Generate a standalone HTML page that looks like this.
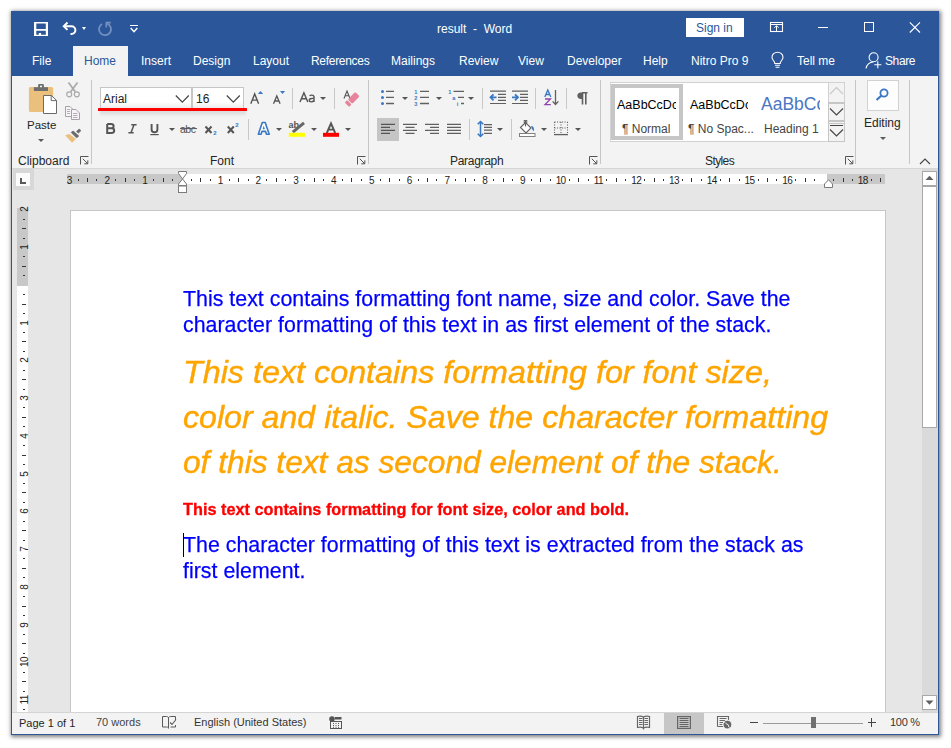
<!DOCTYPE html>
<html><head><meta charset="utf-8">
<style>
html,body{margin:0;padding:0;}
body{width:951px;height:748px;overflow:hidden;position:relative;background:#fff;font-family:"Liberation Sans",sans-serif;}
.a{position:absolute;}
.t{position:absolute;white-space:nowrap;line-height:1;}
svg{position:absolute;overflow:visible;}
.tab{position:absolute;top:55px;color:#fff;font-size:12px;line-height:12px;white-space:nowrap;}
.lbl{position:absolute;color:#262626;font-size:12px;line-height:12px;white-space:nowrap;}
.sep{position:absolute;width:1px;background:#c8c8c8;}
.gsep{position:absolute;width:1px;background:#d2d2d2;top:80px;height:84px;}
.dd{position:absolute;width:0;height:0;border-left:3px solid transparent;border-right:3px solid transparent;border-top:3.2px solid #555;}
.rn{position:absolute;font-size:10px;line-height:10px;color:#222;top:176px;}
.st{position:absolute;font-size:11px;line-height:11px;color:#444;top:716px;white-space:nowrap;}
</style></head>
<body>
<!-- window shadow & frame -->
<div class="a" style="left:11px;top:11px;width:928px;height:724px;background:#2b579a;box-shadow:0.5px 0.5px 4px 1px rgba(0,0,0,0.5);"></div>
<!-- ribbon background -->
<div class="a" style="left:12px;top:76px;width:926px;height:92px;background:#f3f3f3;"></div>
<div class="a" style="left:12px;top:168px;width:926px;height:1px;background:#d6d6d6;"></div>
<!-- doc area -->
<div class="a" style="left:12px;top:169px;width:926px;height:543px;background:#e6e6e6;"></div>
<!-- status bar -->
<div class="a" style="left:12px;top:712px;width:926px;height:1px;background:#d4d4d4;"></div>
<div class="a" style="left:12px;top:713px;width:926px;height:21px;background:#f3f3f3;"></div>

<!-- ===== title bar ===== -->
<svg style="left:34px;top:22px" width="14" height="14" viewBox="0 0 14 14">
 <path fill-rule="evenodd" fill="#fff" d="M0 0 H14 V14 H0 Z M2.3 1.5 V6.9 H11.8 V1.5 Z M2.3 8.8 V12.8 H4.8 V10.9 H7.1 V12.8 H11.8 V8.8 Z"/>
</svg>
<svg style="left:62px;top:21px" width="16" height="16" viewBox="0 0 16 16">
 <path d="M5.5 1.5 L1.8 5.2 L5.5 8.9" fill="none" stroke="#fff" stroke-width="2"/>
 <path d="M2.5 5.2 H9.5 A3.9 3.9 0 0 1 9.5 13 H8.5" fill="none" stroke="#fff" stroke-width="2"/>
</svg>
<div class="dd" style="left:82px;top:27px;border-top-color:#fff;border-left-width:2.5px;border-right-width:2.5px;border-top-width:3px"></div>
<svg style="left:97px;top:21px" width="16" height="16" viewBox="0 0 16 16">
 <path d="M9.5 2.4 A6 6 0 1 1 5 3" fill="none" stroke="#7590c0" stroke-width="1.8"/>
 <path d="M8.6 1.6 H13.8 M9.3 1.6 V6.6" fill="none" stroke="#7590c0" stroke-width="1.6"/>
</svg>
<div class="a" style="left:130px;top:25px;width:8px;height:1.3px;background:#fff"></div>
<svg style="left:130px;top:27px" width="9" height="6" viewBox="0 0 9 6">
 <path d="M0.7 1 L4 4.8 L7.3 1" fill="none" stroke="#fff" stroke-width="1.4"/>
</svg>
<div class="t" style="left:437px;top:23px;font-size:12px;color:#fff">result&nbsp; -&nbsp; Word</div>
<div class="a" style="left:686px;top:18px;width:58px;height:19px;background:#fff;"></div>
<div class="t" style="left:696px;top:22px;font-size:12px;color:#2b579a">Sign in</div>
<svg style="left:770px;top:22px" width="13" height="10" viewBox="0 0 13 10">
 <rect x="0.5" y="0.5" width="12" height="9" fill="none" stroke="#fff" stroke-width="1.1"/>
 <path d="M0.5 2.5 H12.5" stroke="#fff" stroke-width="1"/>
 <path d="M6.5 9.5 V3.8 M4.4 5.8 L6.5 3.7 L8.6 5.8" fill="none" stroke="#fff" stroke-width="1"/>
</svg>
<div class="a" style="left:818px;top:27px;width:10px;height:1px;background:#fff"></div>
<div class="a" style="left:864px;top:22px;width:8px;height:8px;border:1px solid #fff"></div>
<svg style="left:909px;top:22px" width="12" height="11" viewBox="0 0 12 11">
 <path d="M0.8 0.3 L11 10.5 M11 0.3 L0.8 10.5" stroke="#fff" stroke-width="1.1"/>
</svg>

<!-- ===== tabs ===== -->
<div class="a" style="left:73px;top:46px;width:55px;height:30px;background:#f3f3f3"></div>
<div class="tab" style="left:32px">File</div>
<div class="tab" style="left:84px;color:#2b579a">Home</div>
<div class="tab" style="left:141px">Insert</div>
<div class="tab" style="left:193px">Design</div>
<div class="tab" style="left:253px">Layout</div>
<div class="tab" style="left:311px;letter-spacing:-0.3px">References</div>
<div class="tab" style="left:391px">Mailings</div>
<div class="tab" style="left:459px">Review</div>
<div class="tab" style="left:518px">View</div>
<div class="tab" style="left:567px">Developer</div>
<div class="tab" style="left:643px">Help</div>
<div class="tab" style="left:691px">Nitro Pro 9</div>
<svg style="left:771px;top:52px" width="13" height="17" viewBox="0 0 13 17">
 <path d="M3.8 11.5 C3.8 9 1 8 1 5.4 A5.5 5.2 0 0 1 12 5.4 C12 8 9.2 9 9.2 11.5 Z" fill="none" stroke="#fff" stroke-width="1.1"/>
 <path d="M4 13.3 H9 M4.6 15.3 H8.4" stroke="#fff" stroke-width="1.1"/>
</svg>
<div class="tab" style="left:797px">Tell me</div>
<svg style="left:865px;top:52px" width="16" height="17" viewBox="0 0 16 17">
 <circle cx="8.6" cy="5.3" r="4.5" fill="none" stroke="#fff" stroke-width="1.1"/>
 <path d="M1 16.5 C1.8 12.5 4.5 10.2 8.3 10" fill="none" stroke="#fff" stroke-width="1.1"/>
 <path d="M12.8 9.3 V16.3 M9.3 12.8 H16.3" stroke="#fff" stroke-width="1.1"/>
</svg>
<div class="tab" style="left:885px;letter-spacing:-0.4px">Share</div>

<!-- Clipboard group -->
<svg style="left:28px;top:83px" width="30" height="32" viewBox="0 0 30 32">
 <rect x="0.9" y="4" width="24.2" height="25" rx="1.5" fill="#ebc07c"/>
 <rect x="5.9" y="4.2" width="14.1" height="3.8" fill="#6e6e6e"/>
 <rect x="10.1" y="1" width="5.8" height="4" rx="1" fill="#6e6e6e"/>
 <rect x="12" y="2.6" width="2" height="1.6" fill="#f3f3f3"/>
 <path d="M15.5 12.5 H23.4 L28.5 17.4 V30.5 H15.5 Z" fill="#fff" stroke="#6a6a6a" stroke-width="1"/>
 <path d="M23.2 12.5 V17.6 H28.5" fill="none" stroke="#6a6a6a" stroke-width="1"/>
</svg>
<div class="lbl" style="left:27px;top:119px;font-size:11.5px;">Paste</div>
<div class="dd" style="left:38px;top:139px;border-top-color:#5a5a5a"></div>
<svg style="left:65px;top:82px" width="16" height="16" viewBox="0 0 16 16">
 <path d="M3.5 0.5 L10.3 9.8 M12.5 0.5 L5.7 9.8" fill="none" stroke="#a9a9a9" stroke-width="1.7"/>
 <circle cx="4.2" cy="12.3" r="2.5" fill="none" stroke="#a9a9a9" stroke-width="1.2"/>
 <circle cx="11.8" cy="12.3" r="2.5" fill="none" stroke="#a9a9a9" stroke-width="1.2"/>
</svg>
<svg style="left:65px;top:106px" width="16" height="15" viewBox="0 0 16 15">
 <path d="M0.5 0.5 H5 L7.5 3 V10.5 H0.5 Z" fill="#f7f5f7" stroke="#aaa1a8" stroke-width="1"/>
 <path d="M6.5 3.5 H11 L14.5 7 V13.5 H6.5 Z" fill="#f7f5f7" stroke="#aaa1a8" stroke-width="1"/>
 <path d="M2 3.5 H5 M2 5.5 H5 M2 7.5 H5 M8 7.5 H12.5 M8 9.5 H12.5 M8 11.5 H12.5" stroke="#b5adb3" stroke-width="1"/>
</svg>
<svg style="left:64px;top:128px" width="18" height="16" viewBox="0 0 18 16">
 <path d="M1.1 7.3 L5.4 5.9 L11.9 11 L8.1 14.8 Z" fill="#ebc07c"/>
 <path d="M7.2 4.4 L9.2 3.1 L14.8 8.1 L12.5 9.8 Z" fill="#6a6a6a" stroke="#6a6a6a" stroke-width="0.8" stroke-linejoin="round"/>
 <path d="M12.5 3.3 L15.1 1 L17 2.6 L14.4 5.2 Z" fill="#6a6a6a" stroke="#6a6a6a" stroke-width="0.6" stroke-linejoin="round"/>
</svg>
<div class="sep" style="left:91px;top:80px;height:84px;background:#c6c6c6"></div>
<div class="lbl" style="left:18px;top:155px;">Clipboard</div>
<svg style="left:80px;top:156px" width="9" height="9" viewBox="0 0 9 9">
 <path d="M0.5 8.5 V0.5 H8.5 M2.8 2.8 L7.8 7.8 M7.8 4.3 V7.8 H4.3" fill="none" stroke="#555" stroke-width="1"/>
</svg>

<!-- Font group -->
<div class="a" style="left:100px;top:87px;width:92px;height:21px;background:linear-gradient(#fff 70%,#ececec);border:1px solid #c6c6c6;border-bottom:none;box-sizing:border-box;"></div>
<div class="a" style="left:192px;top:87px;width:52px;height:21px;background:linear-gradient(#fff 70%,#ececec);border:1px solid #c6c6c6;border-bottom:none;box-sizing:border-box;"></div>
<div class="t" style="left:103px;top:93px;font-size:12px;color:#222">Arial</div>
<div class="t" style="left:196px;top:93px;font-size:12px;color:#222">16</div>
<svg style="left:175px;top:94px" width="15" height="10" viewBox="0 0 15 10">
 <path d="M0.8 1.5 L7.3 8.2 L13.8 1.5" fill="none" stroke="#444" stroke-width="1.2"/>
</svg>
<svg style="left:226px;top:94px" width="15" height="10" viewBox="0 0 15 10">
 <path d="M0.8 1.5 L7.3 8.2 L13.8 1.5" fill="none" stroke="#444" stroke-width="1.2"/>
</svg>
<div class="a" style="left:100px;top:110px;width:146px;height:7px;background:linear-gradient(rgba(0,0,0,0.13),rgba(0,0,0,0));filter:blur(1.2px)"></div>
<div class="a" style="left:98px;top:108px;width:149px;height:3px;background:#f00;border-radius:0.5px;"></div>
<!-- grow/shrink -->
<svg style="left:250px;top:90px" width="36" height="15" viewBox="0 0 36 15">
 <path d="M0.8 13.8 L4.7 4 L8.6 13.8 M2.3 10.1 H7.1" fill="none" stroke="#555" stroke-width="1.4"/>
 <path d="M7.9 3.9 L10.5 0.9 L13.1 3.9 Z" fill="#3a78c3"/>
 <path d="M23.5 13.8 L26.8 6 L30.1 13.8 M24.7 11 H28.9" fill="none" stroke="#555" stroke-width="1.3"/>
 <path d="M30 0.9 L35.1 0.9 L32.55 3.9 Z" fill="#3a78c3"/>
</svg>
<div class="sep" style="left:292px;top:88px;height:21px;"></div>
<svg style="left:299px;top:92px" width="17" height="11" viewBox="0 0 17 11">
 <path d="M1 10 L4.9 0.8 L8.8 10 M2.5 6.8 H7.3" fill="none" stroke="#555" stroke-width="1.5"/>
 <path d="M10.6 3.8 C11.5 3 14.5 2.7 15 4.5 V10 M15 6.5 C12 6.2 10.2 6.8 10.2 8.3 C10.2 10.3 13.5 10.3 15 8.5" fill="none" stroke="#555" stroke-width="1.4"/>
</svg>
<div class="dd" style="left:320px;top:97px;"></div>
<div class="sep" style="left:334px;top:88px;height:21px;"></div>
<svg style="left:343px;top:90px" width="16" height="16" viewBox="0 0 16 16">
 <path d="M1 8.5 L4 1 L7 8.5 M2.2 5.8 H5.8" fill="none" stroke="#555" stroke-width="1.1"/>
 <g transform="translate(9.3 9.3) rotate(-45)">
  <rect x="-3.2" y="-3.1" width="10.4" height="6.2" rx="1.2" fill="#e5849a"/>
  <rect x="-7.6" y="-3.1" width="3.4" height="6.2" rx="1" fill="#e5849a"/>
 </g>
</svg>
<!-- row 2 -->
<svg style="left:106px;top:124px" width="9" height="10" viewBox="0 0 9 10">
 <path d="M1.2 0 V9 H5 C7 9 8.2 8 8.2 6.5 C8.2 5 7.2 4.3 5.5 4.3 H1.2 M5.5 4.3 C6.8 4.3 7.6 3.6 7.6 2.2 C7.6 0.8 6.6 0 5 0 H1.2" fill="none" stroke="#555" stroke-width="2"/>
</svg>
<svg style="left:128px;top:124px" width="9" height="10" viewBox="0 0 9 10">
 <path d="M3.3 0.8 H8.6 M0.4 8.7 H5.7 M6 0.8 L3 8.7" fill="none" stroke="#555" stroke-width="1.5"/>
</svg>
<svg style="left:150px;top:124px" width="10" height="12" viewBox="0 0 10 12">
 <path d="M1.6 0 V5.5 C1.6 7.5 2.8 8.3 4.5 8.3 C6.2 8.3 7.4 7.5 7.4 5.5 V0" fill="none" stroke="#555" stroke-width="1.9"/>
 <path d="M0.3 10.6 H8.7" stroke="#555" stroke-width="1.2"/>
</svg>
<div class="dd" style="left:169px;top:128px;"></div>
<svg style="left:180px;top:123px" width="18" height="11" viewBox="0 0 18 11">
 <text x="0" y="9.5" font-family="Liberation Sans" font-size="10.5" fill="#555" letter-spacing="-0.5">abc</text>
 <path d="M0 5.6 H17" stroke="#555" stroke-width="1"/>
</svg>
<svg style="left:204px;top:123px" width="36" height="13" viewBox="0 0 36 13">
 <path d="M1.5 3.5 L7.5 10 M7.5 3.5 L1.5 10" stroke="#555" stroke-width="2"/>
 <text x="9.3" y="11.8" font-family="Liberation Sans" font-size="6" font-weight="bold" fill="#3a78c3">2</text>
 <path d="M23.8 3.5 L29.8 10 M29.8 3.5 L23.8 10" stroke="#555" stroke-width="2"/>
 <text x="31.3" y="4.2" font-family="Liberation Sans" font-size="6" font-weight="bold" fill="#3a78c3">2</text>
</svg>
<div class="sep" style="left:248px;top:119px;height:21px;"></div>
<svg style="left:257px;top:121px" width="14" height="15" viewBox="0 0 14 15">
 <path d="M1.3 13.2 L5.3 1.5 H8.2 L12.2 13.2 H9.5 L8.6 10.4 H4.9 L4 13.2 Z" fill="#fff" stroke="#3a78c3" stroke-width="1.6" stroke-linejoin="round"/>
 <path d="M5.6 8.2 H7.9 L6.75 4.6 Z" fill="#3a78c3"/>
</svg>
<div class="dd" style="left:276px;top:128px;"></div>
<svg style="left:288px;top:121px" width="18" height="16" viewBox="0 0 18 16">
 <text x="0.6" y="7" font-family="Liberation Sans" font-size="9" font-weight="bold" fill="#555">ab</text>
 <path d="M4.8 11.2 L16 1.8" stroke="#666" stroke-width="3"/>
 <rect x="0.8" y="11.8" width="16.1" height="4" fill="#ffff00"/>
</svg>
<div class="dd" style="left:311px;top:128px;"></div>
<svg style="left:323px;top:122px" width="16" height="15" viewBox="0 0 16 15">
 <path d="M3.8 11 L8 1.3 L12.2 11 M5.3 7.6 H10.7" fill="none" stroke="#555" stroke-width="1.9"/>
 <rect x="0" y="10.8" width="16" height="4" fill="#f00"/>
</svg>
<div class="dd" style="left:345px;top:128px;"></div>
<div class="lbl" style="left:210px;top:155px;">Font</div>
<svg style="left:357px;top:156px" width="9" height="9" viewBox="0 0 9 9">
 <path d="M0.5 8.5 V0.5 H8.5 M2.8 2.8 L7.8 7.8 M7.8 4.3 V7.8 H4.3" fill="none" stroke="#555" stroke-width="1"/>
</svg>
<div class="sep" style="left:368px;top:80px;height:84px;background:#c6c6c6"></div>

<!-- Paragraph group -->
<svg style="left:380px;top:89px" width="15" height="16" viewBox="0 0 15 16">
 <circle cx="2.5" cy="2.4" r="1.5" fill="#3a78c3"/><circle cx="2.5" cy="8.4" r="1.5" fill="#3a78c3"/><circle cx="2.5" cy="14.5" r="1.5" fill="#3a78c3"/>
 <path d="M6 2.4 H14 M6 8.4 H14 M6 14.5 H14" stroke="#606060" stroke-width="1.3"/>
</svg>
<div class="dd" style="left:402px;top:97px;"></div>
<svg style="left:413px;top:88px" width="17" height="18" viewBox="0 0 17 18">
 <text x="1.3" y="5.8" font-family="Liberation Sans" font-size="5.6" font-weight="bold" fill="#3a78c3">1</text>
 <text x="1.3" y="11.8" font-family="Liberation Sans" font-size="5.6" font-weight="bold" fill="#3a78c3">2</text>
 <text x="1.3" y="17.8" font-family="Liberation Sans" font-size="5.6" font-weight="bold" fill="#3a78c3">3</text>
 <path d="M7 3.4 H16 M7 9.4 H16 M7 15.5 H16" stroke="#606060" stroke-width="1.3"/>
</svg>
<div class="dd" style="left:436px;top:97px;"></div>
<svg style="left:447px;top:88px" width="18" height="18" viewBox="0 0 18 18">
 <text x="1.3" y="5.8" font-family="Liberation Sans" font-size="5.6" font-weight="bold" fill="#3a78c3">1</text>
 <text x="5.3" y="11.8" font-family="Liberation Sans" font-size="5.6" font-weight="bold" fill="#3a78c3">a</text>
 <text x="9.8" y="17.8" font-family="Liberation Sans" font-size="5.6" font-weight="bold" fill="#3a78c3">i</text>
 <path d="M6.5 3.4 H17 M11 9.4 H17 M14 15.5 H17" stroke="#606060" stroke-width="1.3"/>
</svg>
<div class="dd" style="left:468px;top:97px;"></div>
<div class="sep" style="left:482px;top:88px;height:21px;"></div>
<svg style="left:489px;top:90px" width="18" height="15" viewBox="0 0 18 15">
 <path d="M1 1.2 H17 M9 4.3 H17 M9 7.3 H17 M9 10.4 H17 M1 13.5 H17" stroke="#606060" stroke-width="1.2"/>
 <path d="M1.5 7.3 H7.5 M4.5 4.3 L1.5 7.3 L4.5 10.3" fill="none" stroke="#3a78c3" stroke-width="1.8"/>
</svg>
<svg style="left:511px;top:90px" width="18" height="15" viewBox="0 0 18 15">
 <path d="M1 1.2 H17 M9 4.3 H17 M9 7.3 H17 M9 10.4 H17 M1 13.5 H17" stroke="#606060" stroke-width="1.2"/>
 <path d="M1 7.3 H7 M4 4.3 L7 7.3 L4 10.3" fill="none" stroke="#3a78c3" stroke-width="1.8"/>
</svg>
<div class="sep" style="left:535px;top:88px;height:21px;"></div>
<svg style="left:544px;top:89px" width="16" height="17" viewBox="0 0 16 17">
 <path d="M0.8 8 L3.8 1 L6.8 8 M2 5.5 H5.6" fill="none" stroke="#3a78c3" stroke-width="1.3"/>
 <path d="M1 10 H6.5 L1 15.6 H6.8" fill="none" stroke="#8e44ad" stroke-width="1.3"/>
 <path d="M11.5 1 V15.5 M8.6 12.4 L11.5 15.5 L14.4 12.4" fill="none" stroke="#606060" stroke-width="1.3"/>
</svg>
<div class="sep" style="left:566px;top:88px;height:21px;"></div>
<svg style="left:577px;top:92px" width="11" height="13" viewBox="0 0 11 13">
 <path d="M5.5 0.5 H3.8 C1.6 0.5 0.3 1.9 0.3 3.7 C0.3 5.5 1.6 6.9 3.8 6.9 H5.5 Z" fill="#606060"/>
 <path d="M5.5 0.8 V12.5 M8.8 0.8 V12.5 M5 0.8 H10.5" stroke="#606060" stroke-width="1.6"/>
</svg>
<!-- row 2 -->
<div class="a" style="left:377px;top:118px;width:22px;height:23px;background:#c5c5c5"></div>
<svg style="left:380px;top:123px" width="16" height="12" viewBox="0 0 16 12">
 <path d="M1 1.3 H15 M1 4.3 H10 M1 7.3 H15 M1 10.3 H10" stroke="#555" stroke-width="1.2"/>
</svg>
<svg style="left:402px;top:123px" width="16" height="12" viewBox="0 0 16 12">
 <path d="M1 1.3 H15 M3.5 4.3 H12.5 M1 7.3 H15 M3.5 10.3 H12.5" stroke="#606060" stroke-width="1.2"/>
</svg>
<svg style="left:424px;top:123px" width="16" height="12" viewBox="0 0 16 12">
 <path d="M1 1.3 H15 M6 4.3 H15 M1 7.3 H15 M6 10.3 H15" stroke="#606060" stroke-width="1.2"/>
</svg>
<svg style="left:446px;top:123px" width="16" height="12" viewBox="0 0 16 12">
 <path d="M1 1.3 H15 M1 4.3 H15 M1 7.3 H15 M1 10.3 H15" stroke="#606060" stroke-width="1.2"/>
</svg>
<div class="sep" style="left:469px;top:119px;height:21px;"></div>
<svg style="left:476px;top:120px" width="17" height="18" viewBox="0 0 17 18">
 <path d="M4.5 1.5 V16.5 M1.7 4.3 L4.5 1.5 L7.3 4.3 M1.7 13.7 L4.5 16.5 L7.3 13.7" fill="none" stroke="#3a78c3" stroke-width="1.5"/>
 <path d="M8 4.6 H16 M8 7.4 H16 M8 10.1 H16 M8 13.4 H16" stroke="#606060" stroke-width="1.2"/>
</svg>
<div class="dd" style="left:497px;top:128px;"></div>
<div class="sep" style="left:511px;top:119px;height:21px;"></div>
<svg style="left:518px;top:120px" width="18" height="18" viewBox="0 0 18 18">
 <path d="M2.5 7.5 L7.5 2.5 L13 8 L8 13 Z" fill="#fff" stroke="#606060" stroke-width="1.1"/>
 <path d="M7.5 1 V6.5" stroke="#606060" stroke-width="1.1"/>
 <rect x="6.2" y="0.5" width="2.6" height="2" fill="none" stroke="#606060" stroke-width="0.9"/>
 <path d="M13 6 C15.5 6 16.5 8 15.8 11.5 L14.3 9.5 Z" fill="#3a78c3"/>
 <rect x="1.5" y="13.5" width="15.5" height="3" fill="#fff" stroke="#808080" stroke-width="1"/>
</svg>
<div class="dd" style="left:541px;top:128px;"></div>
<svg style="left:553px;top:121px" width="16" height="15" viewBox="0 0 16 15">
 <path d="M1.5 1 V13 M14.5 1 V13 M1.5 1 H14.5 M8 1 V13 M1.5 7 H14.5" fill="none" stroke="#606060" stroke-width="1.1" stroke-dasharray="1.1 1.4"/>
 <path d="M1 13.6 H15" stroke="#606060" stroke-width="1.3"/>
</svg>
<div class="dd" style="left:575px;top:128px;"></div>
<div class="lbl" style="left:450px;top:155px;letter-spacing:-0.3px;">Paragraph</div>
<svg style="left:589px;top:156px" width="9" height="9" viewBox="0 0 9 9">
 <path d="M0.5 8.5 V0.5 H8.5 M2.8 2.8 L7.8 7.8 M7.8 4.3 V7.8 H4.3" fill="none" stroke="#555" stroke-width="1"/>
</svg>
<div class="sep" style="left:600px;top:80px;height:84px;background:#c6c6c6"></div>

<!-- Styles group -->
<div class="a" style="left:610px;top:82px;width:235px;height:60px;background:#fff;border:1px solid #d2d2d2;box-sizing:border-box;"></div>
<div class="a" style="left:611px;top:84px;width:72px;height:56px;border:4px solid #c6c6c6;box-sizing:border-box;"></div>
<div class="t" style="left:617px;top:99px;font-size:12.5px;color:#000;width:59px;overflow:hidden;">AaBbCcDc</div>
<div class="t" style="left:622px;top:123px;font-size:12px;color:#444;">&para; Normal</div>
<div class="t" style="left:690px;top:99px;font-size:12.5px;color:#000;width:58px;overflow:hidden;">AaBbCcDc</div>
<div class="t" style="left:688px;top:123px;font-size:12px;color:#444;">&para; No Spac...</div>
<div class="t" style="left:761px;top:96px;font-size:17.5px;color:#4a76c2;width:59px;overflow:hidden;">AaBbCc</div>
<div class="t" style="left:764px;top:123px;font-size:12px;color:#444;">Heading 1</div>
<div class="a" style="left:828px;top:82px;width:17px;height:60px;background:#f3f3f3;border:1px solid #d2d2d2;box-sizing:border-box;"></div>
<div class="a" style="left:828px;top:102px;width:17px;height:1px;background:#c6c6c6;"></div>
<div class="a" style="left:828px;top:121px;width:17px;height:1px;background:#c6c6c6;"></div>
<div class="a" style="left:828px;top:103px;width:17px;height:18px;border:1px solid #c6c6c6;box-sizing:border-box;"></div>
<div class="a" style="left:828px;top:123px;width:17px;height:19px;border:1px solid #c6c6c6;box-sizing:border-box;"></div>
<svg style="left:829px;top:86px" width="15" height="10" viewBox="0 0 15 10"><path d="M1 8 L7.5 1.5 L14 8" fill="none" stroke="#c8c8c8" stroke-width="1.1"/></svg>
<svg style="left:829px;top:107px" width="15" height="10" viewBox="0 0 15 10"><path d="M1 1.5 L7.5 8 L14 1.5" fill="none" stroke="#444" stroke-width="1.1"/></svg>
<div class="a" style="left:830px;top:125px;width:13px;height:1px;background:#444;"></div>
<svg style="left:829px;top:128px" width="15" height="10" viewBox="0 0 15 10"><path d="M1 1.5 L7.5 8 L14 1.5" fill="none" stroke="#444" stroke-width="1.1"/></svg>
<div class="lbl" style="left:705px;top:155px;letter-spacing:-0.6px;">Styles</div>
<svg style="left:845px;top:156px" width="9" height="9" viewBox="0 0 9 9">
 <path d="M0.5 8.5 V0.5 H8.5 M2.8 2.8 L7.8 7.8 M7.8 4.3 V7.8 H4.3" fill="none" stroke="#555" stroke-width="1"/>
</svg>
<div class="sep" style="left:855px;top:80px;height:84px;background:#c6c6c6"></div>
<!-- Editing -->
<div class="a" style="left:867px;top:80px;width:32px;height:31px;background:#fdfdfd;border:1px solid #d2d2d2;box-sizing:border-box;"></div>
<svg style="left:875px;top:88px" width="15" height="13" viewBox="0 0 15 13">
 <circle cx="9" cy="5" r="3.6" fill="none" stroke="#3a78c3" stroke-width="1.8"/>
 <path d="M6.5 7.5 L1.5 12" stroke="#3a78c3" stroke-width="2.2"/>
</svg>
<div class="lbl" style="left:864px;top:117px;">Editing</div>
<div class="dd" style="left:880px;top:137px;border-top-color:#5a5a5a"></div>
<div class="sep" style="left:909px;top:80px;height:84px;background:#c6c6c6"></div>
<svg style="left:919px;top:158px" width="12" height="7" viewBox="0 0 12 7"><path d="M1 6 L6 1 L11 6" fill="none" stroke="#444" stroke-width="1.1"/></svg>

<!-- RIBBON_CONTENT -->

<!-- RULER_START -->
<div class="a" style="left:13px;top:169px;width:21px;height:21px;background:#d8d8d8"></div>
<div class="a" style="left:16px;top:173px;width:14px;height:13px;background:#fbfbfb"></div>
<div class="a" style="left:20px;top:178px;width:2px;height:6px;background:#5a5a5a"></div>
<div class="a" style="left:20px;top:182px;width:6px;height:2px;background:#5a5a5a"></div>
<div class="a" style="left:67px;top:174px;width:818px;height:10px;background:#c8c8c8"></div>
<div class="a" style="left:183px;top:174px;width:644px;height:10px;background:#fff"></div>
<div class="rn" style="left:59.5px;width:20px;text-align:center;letter-spacing:0px;">3</div>
<div class="a" style="left:78px;top:179px;width:1px;height:2px;background:#333"></div>
<div class="a" style="left:87px;top:178px;width:1px;height:4px;background:#333"></div>
<div class="a" style="left:96px;top:179px;width:1px;height:2px;background:#333"></div>
<div class="rn" style="left:97.2px;width:20px;text-align:center;letter-spacing:0px;">2</div>
<div class="a" style="left:115px;top:179px;width:1px;height:2px;background:#333"></div>
<div class="a" style="left:125px;top:178px;width:1px;height:4px;background:#333"></div>
<div class="a" style="left:134px;top:179px;width:1px;height:2px;background:#333"></div>
<div class="rn" style="left:135.0px;width:20px;text-align:center;letter-spacing:0px;">1</div>
<div class="a" style="left:153px;top:179px;width:1px;height:2px;background:#333"></div>
<div class="a" style="left:163px;top:178px;width:1px;height:4px;background:#333"></div>
<div class="a" style="left:172px;top:179px;width:1px;height:2px;background:#333"></div>
<div class="a" style="left:191px;top:179px;width:1px;height:2px;background:#333"></div>
<div class="a" style="left:200px;top:178px;width:1px;height:4px;background:#333"></div>
<div class="a" style="left:210px;top:179px;width:1px;height:2px;background:#333"></div>
<div class="rn" style="left:210.6px;width:20px;text-align:center;letter-spacing:0px;">1</div>
<div class="a" style="left:229px;top:179px;width:1px;height:2px;background:#333"></div>
<div class="a" style="left:238px;top:178px;width:1px;height:4px;background:#333"></div>
<div class="a" style="left:248px;top:179px;width:1px;height:2px;background:#333"></div>
<div class="rn" style="left:248.4px;width:20px;text-align:center;letter-spacing:0px;">2</div>
<div class="a" style="left:266px;top:179px;width:1px;height:2px;background:#333"></div>
<div class="a" style="left:276px;top:178px;width:1px;height:4px;background:#333"></div>
<div class="a" style="left:285px;top:179px;width:1px;height:2px;background:#333"></div>
<div class="rn" style="left:286.1px;width:20px;text-align:center;letter-spacing:0px;">3</div>
<div class="a" style="left:304px;top:179px;width:1px;height:2px;background:#333"></div>
<div class="a" style="left:314px;top:178px;width:1px;height:4px;background:#333"></div>
<div class="a" style="left:323px;top:179px;width:1px;height:2px;background:#333"></div>
<div class="rn" style="left:323.9px;width:20px;text-align:center;letter-spacing:0px;">4</div>
<div class="a" style="left:342px;top:179px;width:1px;height:2px;background:#333"></div>
<div class="a" style="left:351px;top:178px;width:1px;height:4px;background:#333"></div>
<div class="a" style="left:361px;top:179px;width:1px;height:2px;background:#333"></div>
<div class="rn" style="left:361.7px;width:20px;text-align:center;letter-spacing:0px;">5</div>
<div class="a" style="left:380px;top:179px;width:1px;height:2px;background:#333"></div>
<div class="a" style="left:389px;top:178px;width:1px;height:4px;background:#333"></div>
<div class="a" style="left:399px;top:179px;width:1px;height:2px;background:#333"></div>
<div class="rn" style="left:399.5px;width:20px;text-align:center;letter-spacing:0px;">6</div>
<div class="a" style="left:418px;top:179px;width:1px;height:2px;background:#333"></div>
<div class="a" style="left:427px;top:178px;width:1px;height:4px;background:#333"></div>
<div class="a" style="left:436px;top:179px;width:1px;height:2px;background:#333"></div>
<div class="rn" style="left:437.3px;width:20px;text-align:center;letter-spacing:0px;">7</div>
<div class="a" style="left:455px;top:179px;width:1px;height:2px;background:#333"></div>
<div class="a" style="left:465px;top:178px;width:1px;height:4px;background:#333"></div>
<div class="a" style="left:474px;top:179px;width:1px;height:2px;background:#333"></div>
<div class="rn" style="left:475.0px;width:20px;text-align:center;letter-spacing:0px;">8</div>
<div class="a" style="left:493px;top:179px;width:1px;height:2px;background:#333"></div>
<div class="a" style="left:503px;top:178px;width:1px;height:4px;background:#333"></div>
<div class="a" style="left:512px;top:179px;width:1px;height:2px;background:#333"></div>
<div class="rn" style="left:512.8px;width:20px;text-align:center;letter-spacing:0px;">9</div>
<div class="a" style="left:531px;top:179px;width:1px;height:2px;background:#333"></div>
<div class="a" style="left:540px;top:178px;width:1px;height:4px;background:#333"></div>
<div class="a" style="left:550px;top:179px;width:1px;height:2px;background:#333"></div>
<div class="rn" style="left:550.6px;width:20px;text-align:center;letter-spacing:-0.6px;">10</div>
<div class="a" style="left:569px;top:179px;width:1px;height:2px;background:#333"></div>
<div class="a" style="left:578px;top:178px;width:1px;height:4px;background:#333"></div>
<div class="a" style="left:588px;top:179px;width:1px;height:2px;background:#333"></div>
<div class="rn" style="left:588.4px;width:20px;text-align:center;letter-spacing:-0.6px;">11</div>
<div class="a" style="left:606px;top:179px;width:1px;height:2px;background:#333"></div>
<div class="a" style="left:616px;top:178px;width:1px;height:4px;background:#333"></div>
<div class="a" style="left:625px;top:179px;width:1px;height:2px;background:#333"></div>
<div class="rn" style="left:626.2px;width:20px;text-align:center;letter-spacing:-0.6px;">12</div>
<div class="a" style="left:644px;top:179px;width:1px;height:2px;background:#333"></div>
<div class="a" style="left:654px;top:178px;width:1px;height:4px;background:#333"></div>
<div class="a" style="left:663px;top:179px;width:1px;height:2px;background:#333"></div>
<div class="rn" style="left:663.9px;width:20px;text-align:center;letter-spacing:-0.6px;">13</div>
<div class="a" style="left:682px;top:179px;width:1px;height:2px;background:#333"></div>
<div class="a" style="left:691px;top:178px;width:1px;height:4px;background:#333"></div>
<div class="a" style="left:701px;top:179px;width:1px;height:2px;background:#333"></div>
<div class="rn" style="left:701.7px;width:20px;text-align:center;letter-spacing:-0.6px;">14</div>
<div class="a" style="left:720px;top:179px;width:1px;height:2px;background:#333"></div>
<div class="a" style="left:729px;top:178px;width:1px;height:4px;background:#333"></div>
<div class="a" style="left:739px;top:179px;width:1px;height:2px;background:#333"></div>
<div class="rn" style="left:739.5px;width:20px;text-align:center;letter-spacing:-0.6px;">15</div>
<div class="a" style="left:758px;top:179px;width:1px;height:2px;background:#333"></div>
<div class="a" style="left:767px;top:178px;width:1px;height:4px;background:#333"></div>
<div class="a" style="left:776px;top:179px;width:1px;height:2px;background:#333"></div>
<div class="rn" style="left:777.3px;width:20px;text-align:center;letter-spacing:-0.6px;">16</div>
<div class="a" style="left:795px;top:179px;width:1px;height:2px;background:#333"></div>
<div class="a" style="left:805px;top:178px;width:1px;height:4px;background:#333"></div>
<div class="a" style="left:814px;top:179px;width:1px;height:2px;background:#333"></div>
<div class="a" style="left:833px;top:179px;width:1px;height:2px;background:#333"></div>
<div class="a" style="left:843px;top:178px;width:1px;height:4px;background:#333"></div>
<div class="a" style="left:852px;top:179px;width:1px;height:2px;background:#333"></div>
<div class="rn" style="left:852.8px;width:20px;text-align:center;letter-spacing:-0.6px;">18</div>
<div class="a" style="left:871px;top:179px;width:1px;height:2px;background:#333"></div>
<div class="a" style="left:880px;top:178px;width:1px;height:4px;background:#333"></div>
<svg style="left:178px;top:171px" width="10" height="22" viewBox="0 0 10 22">
 <path d="M0.5 0.5 H8.5 V2.5 L4.5 8 L8.5 13 V14.5 H0.5 V13 L4.5 8 L0.5 2.5 Z" fill="#fff" stroke="#7a7a7a" stroke-width="1"/>
 <rect x="0.5" y="15" width="8" height="6.5" fill="#fff" stroke="#7a7a7a" stroke-width="1"/>
</svg>
<svg style="left:824px;top:179px" width="10" height="9" viewBox="0 0 10 9">
 <path d="M0.5 8.5 V5 L4.5 0.8 L8.5 5 V8.5 Z" fill="#fff" stroke="#7a7a7a" stroke-width="1"/>
</svg>
<div class="a" style="left:17px;top:208px;width:11px;height:78px;background:#c8c8c8"></div>
<div class="a" style="left:17px;top:286px;width:11px;height:426px;background:#fff"></div>
<div class="rn" style="left:14.5px;top:204.3px;width:20px;height:10px;text-align:center;transform:rotate(-90deg);letter-spacing:0px;">2</div>
<div class="a" style="left:23px;top:219px;width:2px;height:1px;background:#333"></div>
<div class="a" style="left:22px;top:228px;width:4px;height:1px;background:#333"></div>
<div class="a" style="left:23px;top:238px;width:2px;height:1px;background:#333"></div>
<div class="rn" style="left:14.5px;top:242.1px;width:20px;height:10px;text-align:center;transform:rotate(-90deg);letter-spacing:0px;">1</div>
<div class="a" style="left:23px;top:256px;width:2px;height:1px;background:#333"></div>
<div class="a" style="left:22px;top:266px;width:4px;height:1px;background:#333"></div>
<div class="a" style="left:23px;top:275px;width:2px;height:1px;background:#333"></div>
<div class="a" style="left:23px;top:294px;width:2px;height:1px;background:#333"></div>
<div class="a" style="left:22px;top:304px;width:4px;height:1px;background:#333"></div>
<div class="a" style="left:23px;top:313px;width:2px;height:1px;background:#333"></div>
<div class="rn" style="left:14.5px;top:317.6px;width:20px;height:10px;text-align:center;transform:rotate(-90deg);letter-spacing:0px;">1</div>
<div class="a" style="left:23px;top:332px;width:2px;height:1px;background:#333"></div>
<div class="a" style="left:22px;top:341px;width:4px;height:1px;background:#333"></div>
<div class="a" style="left:23px;top:351px;width:2px;height:1px;background:#333"></div>
<div class="rn" style="left:14.5px;top:355.3px;width:20px;height:10px;text-align:center;transform:rotate(-90deg);letter-spacing:0px;">2</div>
<div class="a" style="left:23px;top:370px;width:2px;height:1px;background:#333"></div>
<div class="a" style="left:22px;top:379px;width:4px;height:1px;background:#333"></div>
<div class="a" style="left:23px;top:389px;width:2px;height:1px;background:#333"></div>
<div class="rn" style="left:14.5px;top:393.1px;width:20px;height:10px;text-align:center;transform:rotate(-90deg);letter-spacing:0px;">3</div>
<div class="a" style="left:23px;top:407px;width:2px;height:1px;background:#333"></div>
<div class="a" style="left:22px;top:417px;width:4px;height:1px;background:#333"></div>
<div class="a" style="left:23px;top:426px;width:2px;height:1px;background:#333"></div>
<div class="rn" style="left:14.5px;top:430.8px;width:20px;height:10px;text-align:center;transform:rotate(-90deg);letter-spacing:0px;">4</div>
<div class="a" style="left:23px;top:445px;width:2px;height:1px;background:#333"></div>
<div class="a" style="left:22px;top:455px;width:4px;height:1px;background:#333"></div>
<div class="a" style="left:23px;top:464px;width:2px;height:1px;background:#333"></div>
<div class="rn" style="left:14.5px;top:468.6px;width:20px;height:10px;text-align:center;transform:rotate(-90deg);letter-spacing:0px;">5</div>
<div class="a" style="left:23px;top:483px;width:2px;height:1px;background:#333"></div>
<div class="a" style="left:22px;top:492px;width:4px;height:1px;background:#333"></div>
<div class="a" style="left:23px;top:502px;width:2px;height:1px;background:#333"></div>
<div class="rn" style="left:14.5px;top:506.3px;width:20px;height:10px;text-align:center;transform:rotate(-90deg);letter-spacing:0px;">6</div>
<div class="a" style="left:23px;top:521px;width:2px;height:1px;background:#333"></div>
<div class="a" style="left:22px;top:530px;width:4px;height:1px;background:#333"></div>
<div class="a" style="left:23px;top:540px;width:2px;height:1px;background:#333"></div>
<div class="rn" style="left:14.5px;top:544.0px;width:20px;height:10px;text-align:center;transform:rotate(-90deg);letter-spacing:0px;">7</div>
<div class="a" style="left:23px;top:558px;width:2px;height:1px;background:#333"></div>
<div class="a" style="left:22px;top:568px;width:4px;height:1px;background:#333"></div>
<div class="a" style="left:23px;top:577px;width:2px;height:1px;background:#333"></div>
<div class="rn" style="left:14.5px;top:581.8px;width:20px;height:10px;text-align:center;transform:rotate(-90deg);letter-spacing:0px;">8</div>
<div class="a" style="left:23px;top:596px;width:2px;height:1px;background:#333"></div>
<div class="a" style="left:22px;top:606px;width:4px;height:1px;background:#333"></div>
<div class="a" style="left:23px;top:615px;width:2px;height:1px;background:#333"></div>
<div class="rn" style="left:14.5px;top:619.5px;width:20px;height:10px;text-align:center;transform:rotate(-90deg);letter-spacing:0px;">9</div>
<div class="a" style="left:23px;top:634px;width:2px;height:1px;background:#333"></div>
<div class="a" style="left:22px;top:643px;width:4px;height:1px;background:#333"></div>
<div class="a" style="left:23px;top:653px;width:2px;height:1px;background:#333"></div>
<div class="rn" style="left:14.5px;top:657.3px;width:20px;height:10px;text-align:center;transform:rotate(-90deg);letter-spacing:-0.6px;">10</div>
<div class="a" style="left:23px;top:672px;width:2px;height:1px;background:#333"></div>
<div class="a" style="left:22px;top:681px;width:4px;height:1px;background:#333"></div>
<div class="a" style="left:23px;top:691px;width:2px;height:1px;background:#333"></div>
<div class="rn" style="left:14.5px;top:695.0px;width:20px;height:10px;text-align:center;transform:rotate(-90deg);letter-spacing:-0.6px;">11</div>
<div class="a" style="left:23px;top:709px;width:2px;height:1px;background:#333"></div>
<div class="a" style="left:70px;top:210px;width:816px;height:502px;background:#fff;border-left:1px solid #c6c6c6;border-top:1px solid #c6c6c6;border-right:1px solid #c6c6c6;box-sizing:border-box"></div>
<div class="a" style="left:922px;top:169px;width:16px;height:543px;background:#dadada"></div>
<div class="a" style="left:922px;top:171px;width:15px;height:15px;background:#fff;border:1px solid #a8a8a8;box-sizing:border-box"></div>
<svg style="left:925px;top:175px" width="9" height="6" viewBox="0 0 9 6"><path d="M0.5 5 L4.5 0.7 L8.5 5 Z" fill="#606060"/></svg>
<div class="a" style="left:922px;top:186px;width:15px;height:242px;background:#fff;border:1px solid #a8a8a8;box-sizing:border-box"></div>
<div class="a" style="left:922px;top:695px;width:15px;height:15px;background:#fff;border:1px solid #a8a8a8;box-sizing:border-box"></div>
<svg style="left:925px;top:700px" width="9" height="6" viewBox="0 0 9 6"><path d="M0.5 0.5 L4.5 4.8 L8.5 0.5 Z" fill="#606060"/></svg>
<!-- RULER_END -->

<!-- DOC_START -->
<!-- document text -->
<div class="t" style="left:183px;top:288.9px;font-size:21.33px;color:#0000ff;will-change:transform;-webkit-text-stroke:0.25px #0000ff;letter-spacing:0.025px;">This text contains formatting font name, size and color. Save the</div>
<div class="t" style="left:183px;top:314.7px;font-size:21.33px;color:#0000ff;will-change:transform;-webkit-text-stroke:0.25px #0000ff;letter-spacing:0.025px;">character formatting of this text in as first element of the stack.</div>
<div class="t" id="o1" style="transform:scaleX(1.042);left:183px;top:356.6px;font-size:31px;font-style:italic;color:#ffa500;-webkit-text-stroke:0.4px #ffa500;will-change:transform;transform-origin:0 0;">This text contains formatting for font size,</div>
<div class="t" id="o2" style="transform:scaleX(1.037);left:183px;top:401.9px;font-size:31px;font-style:italic;color:#ffa500;-webkit-text-stroke:0.4px #ffa500;will-change:transform;transform-origin:0 0;">color and italic. Save the character formatting</div>
<div class="t" id="o3" style="transform:scaleX(1.022);left:183px;top:447.3px;font-size:31px;font-style:italic;color:#ffa500;-webkit-text-stroke:0.4px #ffa500;will-change:transform;transform-origin:0 0;">of this text as second element of the stack.</div>
<div class="t" style="left:183px;top:501.1px;font-size:16.3px;font-weight:bold;color:#ff0000;will-change:transform;-webkit-text-stroke:0.3px #ff0000;">This text contains formatting for font size, color and bold.</div>
<div class="t" style="left:183px;top:534.9px;font-size:21.33px;color:#0000ff;will-change:transform;-webkit-text-stroke:0.25px #0000ff;letter-spacing:0.025px;">The character formatting of this text is extracted from the stack as</div>
<div class="t" style="left:183px;top:560.7px;font-size:21.33px;color:#0000ff;will-change:transform;-webkit-text-stroke:0.25px #0000ff;letter-spacing:0.025px;">first element.</div>
<div class="a" style="left:183px;top:533px;width:1px;height:24px;background:#000"></div>

<!-- DOC_END -->

<!-- STATUS_START -->
<!-- status bar -->
<div class="st" style="left:19px;top:718px;color:#262626;">Page 1 of 1</div>
<div class="st" style="left:96px;top:717px;color:#444;">70 words</div>
<svg style="left:162px;top:716px" width="15" height="13" viewBox="0 0 15 13">
 <path d="M0.5 0.5 H4.5 C5.5 0.5 6.5 1 6.5 2 V12.3 C6.5 11.5 5.5 11 4.5 11 H0.5 Z" fill="none" stroke="#5a5a5a" stroke-width="1"/>
 <path d="M6.5 2 C6.5 1 7.5 0.5 8.5 0.5 H13.5 V4" fill="none" stroke="#5a5a5a" stroke-width="1"/>
 <path d="M8.5 11 H13.5 V9" fill="none" stroke="#5a5a5a" stroke-width="1"/>
 <path d="M8 6.5 L10 8.5 L14 3.5" fill="none" stroke="#5a5a5a" stroke-width="1.1"/>
</svg>
<div class="st" style="left:194px;top:717px;color:#333;">English (United States)</div>
<svg style="left:329px;top:716px" width="13" height="13" viewBox="0 0 13 13">
 <circle cx="3" cy="3" r="2.8" fill="#555"/>
 <rect x="6" y="1" width="6.5" height="2.5" fill="#555"/>
 <rect x="1.5" y="5.5" width="11" height="7" fill="none" stroke="#555" stroke-width="1"/>
 <path d="M4 7.5 H5 M6.5 7.5 H7.5 M9 7.5 H10 M4 9.5 H5 M6.5 9.5 H7.5 M9 9.5 H10 M4 11.3 H5 M6.5 11.3 H7.5 M9 11.3 H10" stroke="#555" stroke-width="1"/>
</svg>
<svg style="left:636px;top:715px" width="15" height="15" viewBox="0 0 15 15">
 <path d="M7.5 2 C6 1.2 3.5 1 1.5 1.5 V12.5 C3.5 12 6 12.2 7.5 13 C9 12.2 11.5 12 13.5 12.5 V1.5 C11.5 1 9 1.2 7.5 2 Z" fill="none" stroke="#666" stroke-width="1.2"/>
 <path d="M7.5 2 V14.5" stroke="#666" stroke-width="1.2"/>
 <path d="M3 3.5 H6.5 M3 5.5 H6.5 M3 7.5 H6.5 M3 9.5 H6.5 M8.5 3.5 H12 M8.5 5.5 H12 M8.5 7.5 H12 M8.5 9.5 H12" stroke="#666" stroke-width="1"/>
</svg>
<div class="a" style="left:664px;top:713px;width:40px;height:21px;background:#c6c6c6"></div>
<svg style="left:677px;top:716px" width="14" height="13" viewBox="0 0 14 13">
 <rect x="0.6" y="0.6" width="12.8" height="11.8" fill="none" stroke="#666" stroke-width="1.2"/>
 <path d="M2.5 2.5 H11.5 M2.5 4.5 H11.5 M2.5 6.5 H11.5 M2.5 8.5 H11.5 M2.5 10.5 H11.5" stroke="#666" stroke-width="1"/>
</svg>
<svg style="left:717px;top:716px" width="15" height="14" viewBox="0 0 15 14">
 <path d="M0.5 10.5 V0.5 H11.5 V4.5 M0.5 10.5 H6" fill="none" stroke="#666" stroke-width="1.1"/>
 <path d="M2.5 2.5 H9.5 M2.5 4.5 H8 M2.5 6.5 H6 M2.5 8.5 H5.5" stroke="#666" stroke-width="1"/>
 <circle cx="10.4" cy="8.6" r="4.4" fill="#666" stroke="#f3f3f3" stroke-width="1"/>
 <path d="M7.5 6.5 C9 6.5 9 8.5 11 8.5 C12 9 11 11 12.5 11.5" fill="none" stroke="#f3f3f3" stroke-width="1"/>
</svg>
<div class="a" style="left:750px;top:722px;width:8px;height:1px;background:#444"></div>
<div class="a" style="left:763px;top:723px;width:100px;height:1px;background:#9a9a9a"></div>
<div class="a" style="left:811px;top:717px;width:5px;height:11px;background:#707070"></div>
<div class="a" style="left:868px;top:722px;width:8px;height:1px;background:#444"></div>
<div class="a" style="left:871px;top:718px;width:1px;height:9px;background:#444"></div>
<div class="st" style="left:890px;top:717px;color:#333;letter-spacing:-0.3px;">100 %</div>

<!-- STATUS_END -->

</body></html>
